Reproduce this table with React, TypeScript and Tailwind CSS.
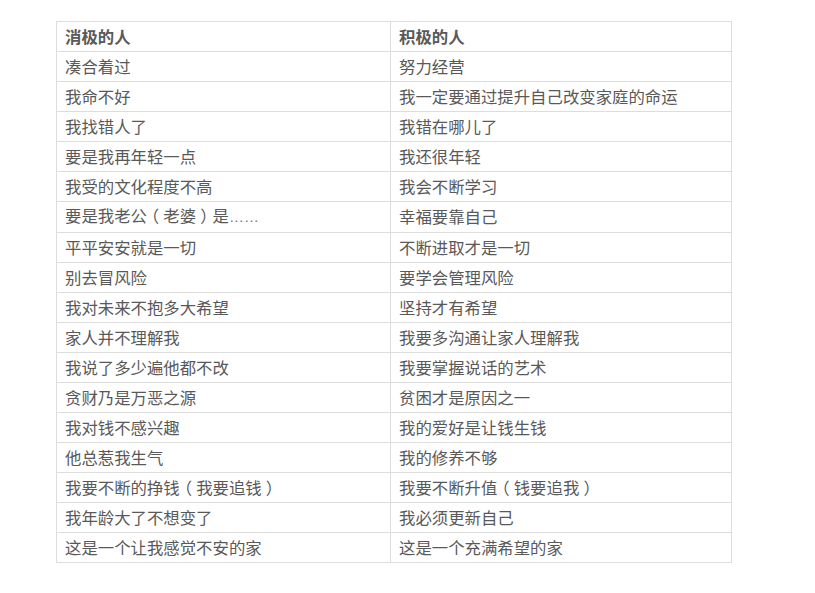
import type { ReactNode } from 'react';

// 全形括號在參考圖中置中顯示
const P = ({ c }: { c: string }) => (
  <span className="inline-block w-[1em] text-center [font-feature-settings:'halt']">{c}</span>
);

const Dots = () => (
  <span className="font-['Liberation_Sans',sans-serif] text-[15px] text-[#777777]">……</span>
);

const rows: [ReactNode, ReactNode][] = [
  ['凑合着过', '努力经营'],
  ['我命不好', '我一定要通过提升自己改变家庭的命运'],
  ['我找错人了', '我错在哪儿了'],
  ['要是我再年轻一点', '我还很年轻'],
  ['我受的文化程度不高', '我会不断学习'],
  [<>要是我老公<P c="（" />老婆<P c="）" />是<Dots /></>, '幸福要靠自己'],
  ['平平安安就是一切', '不断进取才是一切'],
  ['别去冒风险', '要学会管理风险'],
  ['我对未来不抱多大希望', '坚持才有希望'],
  ['家人并不理解我', '我要多沟通让家人理解我'],
  ['我说了多少遍他都不改', '我要掌握说话的艺术'],
  ['贪财乃是万恶之源', '贫困才是原因之一'],
  ['我对钱不感兴趣', '我的爱好是让钱生钱'],
  ['他总惹我生气', '我的修养不够'],
  [<>我要不断的挣钱<P c="（" />我要追钱<P c="）" /></>, <>我要不断升值<P c="（" />钱要追我<P c="）" /></>],
  ['我年龄大了不想变了', '我必须更新自己'],
  ['这是一个让我感觉不安的家', '这是一个充满希望的家'],
];

const cell = 'h-[30px] border border-[#dddddd] px-2 pt-0 pb-[2px] text-left align-middle leading-[26px] whitespace-nowrap';

export default function App() {
  return (
    <div className="min-h-[593px] bg-white pl-[56px] pt-[21px] font-['Noto_Sans_CJK_SC','Microsoft_YaHei',sans-serif] text-[16.4px] text-[#595959]">
      <table className="w-[676px] border-collapse">
        <thead>
          <tr>
            <th className={`${cell} w-[334px] font-bold`}>消极的人</th>
            <th className={`${cell} font-bold`}>积极的人</th>
          </tr>
        </thead>
        <tbody>
          {rows.map(([neg, pos], i) => (
            <tr key={i}>
              <td className={cell}>{neg}</td>
              <td className={cell}>{pos}</td>
            </tr>
          ))}
        </tbody>
      </table>
    </div>
  );
}
